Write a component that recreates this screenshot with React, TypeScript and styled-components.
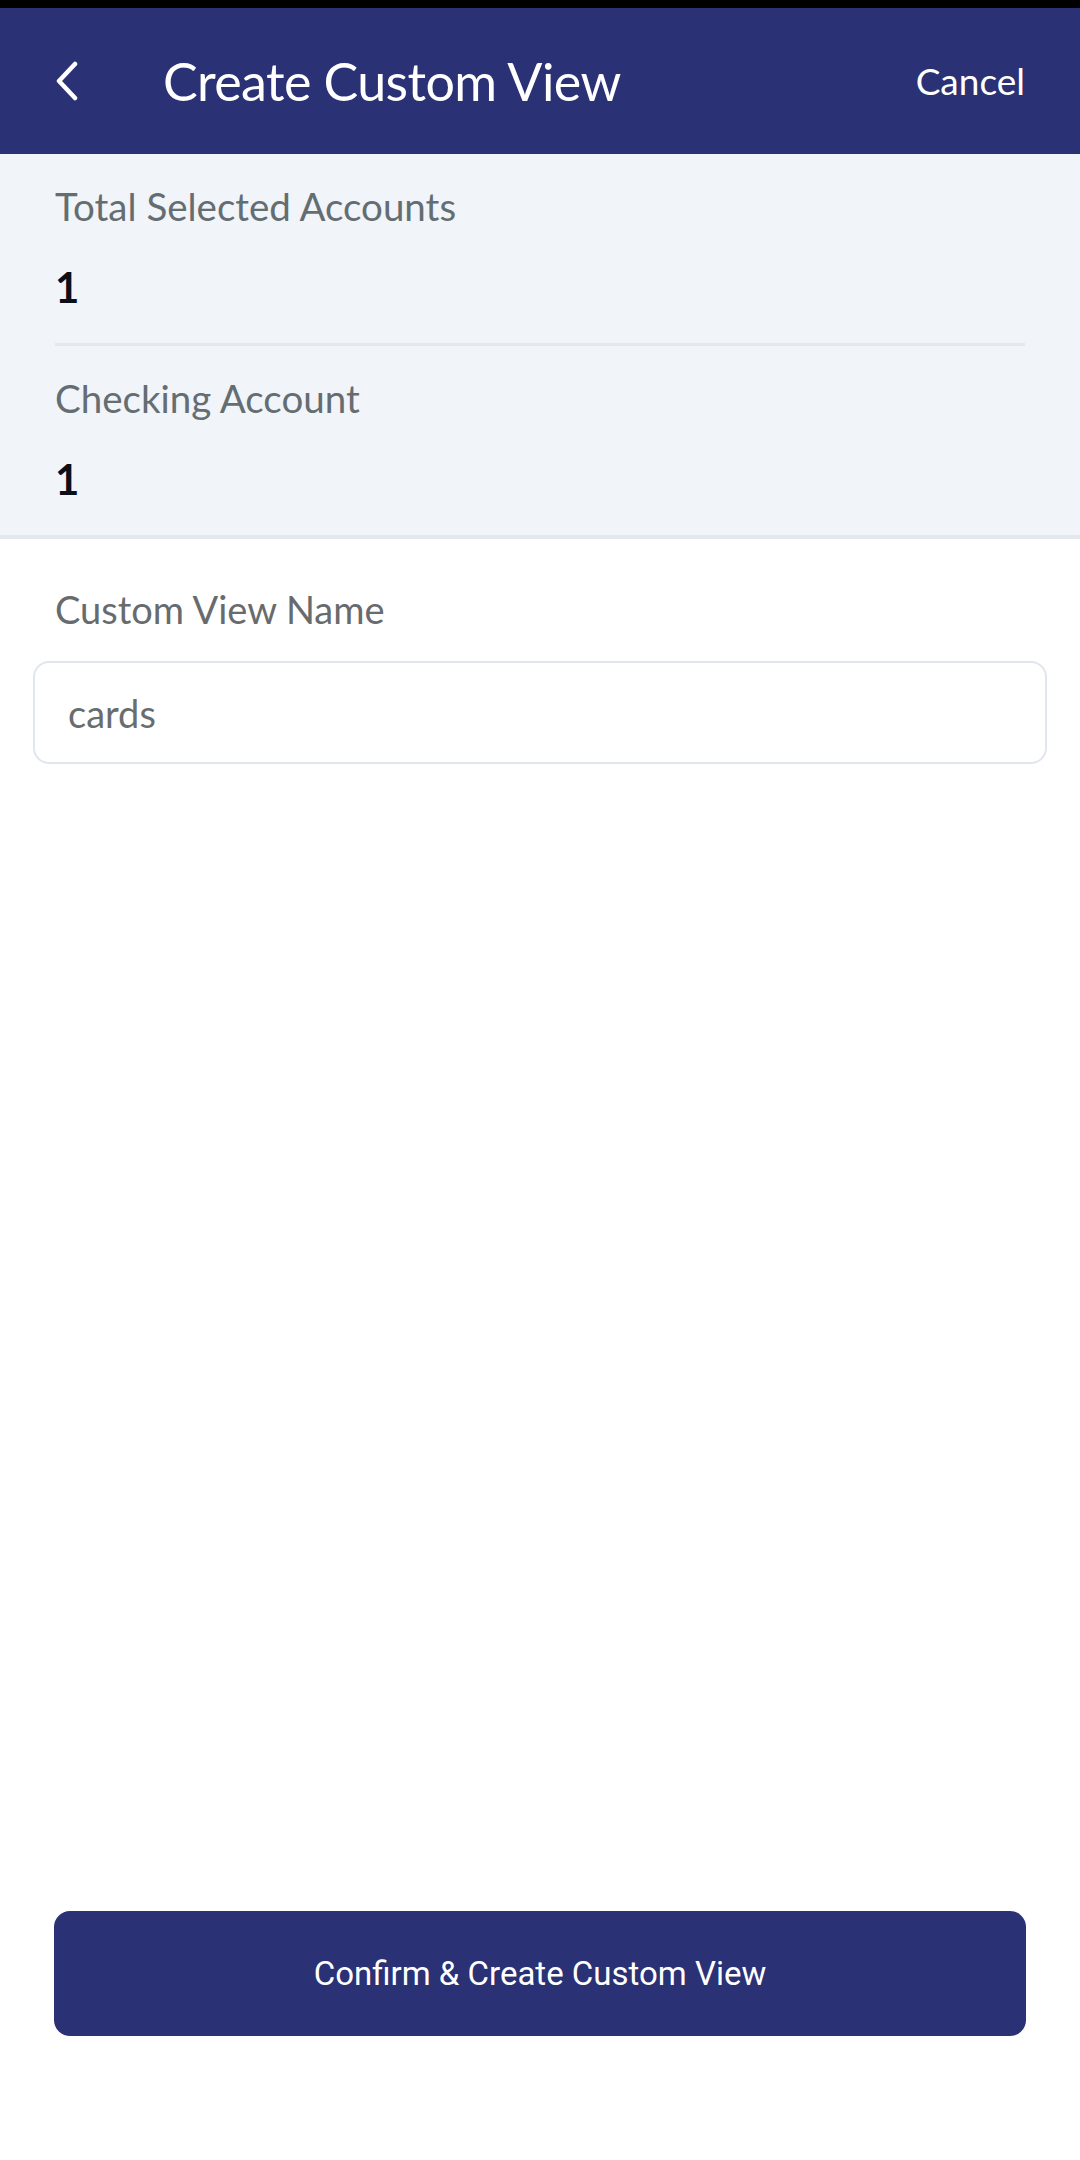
import React from "react";
import styled, { createGlobalStyle } from "styled-components";

const Global = createGlobalStyle`
  html, body { margin: 0; padding: 0; background: #ffffff; }
  body { font-family: "Lato", "Noto Sans", sans-serif; -webkit-font-smoothing: antialiased; }
  * { box-sizing: border-box; }
`;

const Screen = styled.div`
  width: 1080px;
  min-height: 2160px;
  display: flex;
  flex-direction: column;
  background: #ffffff;
`;

const StatusBar = styled.div`
  height: 8px;
  background: #000000;
`;

const Header = styled.header`
  height: 146px;
  background: #2a3174;
  display: flex;
  align-items: center;
  padding: 0 55px;
  color: #ffffff;
`;

const BackButton = styled.button`
  width: 24px;
  height: 40px;
  padding: 0;
  border: none;
  background: transparent;
  display: flex;
  align-items: center;
  justify-content: flex-start;
  color: #ffffff;
`;

const Title = styled.h1`
  margin: 0 0 0 84px;
  flex: 1;
  font-family: "Lato", sans-serif;
  font-weight: 400;
  font-size: 52px;
  line-height: 60px;
  letter-spacing: -0.6px;
`;

const CancelButton = styled.button`
  border: none;
  background: transparent;
  padding: 0;
  color: #ffffff;
  font-family: "Lato", sans-serif;
  font-size: 37px;
  line-height: 44px;
  letter-spacing: 0;
`;

const Summary = styled.section`
  background: #f1f4f8;
  padding: 0 55px;
  border-bottom: 4px solid #e3e8ef;
`;

const SummaryItem = styled.div<{ $divided?: boolean }>`
  padding: 28px 0 31px;
  border-bottom: ${(p) => (p.$divided ? "3px solid #e3e8ef" : "none")};
`;

const SummaryLabel = styled.div`
  font-size: 38.5px;
  line-height: 48px;
  color: #646d71;
  margin-bottom: 32px;
`;

const SummaryValue = styled.div`
  font-size: 42px;
  font-weight: 700;
  line-height: 50px;
  color: #0b0f19;
`;

const Form = styled.main`
  flex: 1;
  padding: 46px 33px 0;
`;

const FieldLabel = styled.label`
  display: block;
  padding-left: 22px;
  font-size: 38px;
  line-height: 48px;
  color: #686b6e;
  margin-bottom: 28px;
`;

const NameInput = styled.input`
  display: block;
  width: 100%;
  height: 103px;
  border: 2px solid #e1e6ee;
  border-radius: 16px;
  background: #ffffff;
  padding: 0 33px;
  font-family: "Lato", sans-serif;
  font-size: 38px;
  color: #686d70;
  outline: none;
`;

const Footer = styled.footer`
  padding: 0 54px 124px;
`;

const ConfirmButton = styled.button`
  width: 100%;
  height: 125px;
  border: none;
  border-radius: 16px;
  background: #2a3174;
  color: #ffffff;
  font-family: "Roboto", sans-serif;
  font-size: 33px;
  font-weight: 400;
`;

const ChevronLeft = () => (
  <svg width="24" height="40" viewBox="0 0 24 40" fill="none">
    <path d="M20 3 L4 20 L20 37" stroke="#ffffff" strokeWidth="4.5" strokeLinecap="round" strokeLinejoin="round" />
  </svg>
);

export default function App() {
  return (
    <>
      <Global />
      <Screen>
        <StatusBar />
        <Header>
          <BackButton aria-label="Back">
            <ChevronLeft />
          </BackButton>
          <Title>Create Custom View</Title>
          <CancelButton>Cancel</CancelButton>
        </Header>
        <Summary>
          <SummaryItem $divided>
            <SummaryLabel>Total Selected Accounts</SummaryLabel>
            <SummaryValue>1</SummaryValue>
          </SummaryItem>
          <SummaryItem>
            <SummaryLabel>Checking Account</SummaryLabel>
            <SummaryValue>1</SummaryValue>
          </SummaryItem>
        </Summary>
        <Form>
          <FieldLabel htmlFor="cv-name">Custom View Name</FieldLabel>
          <NameInput id="cv-name" defaultValue="cards" />
        </Form>
        <Footer>
          <ConfirmButton>Confirm &amp; Create Custom View</ConfirmButton>
        </Footer>
      </Screen>
    </>
  );
}
